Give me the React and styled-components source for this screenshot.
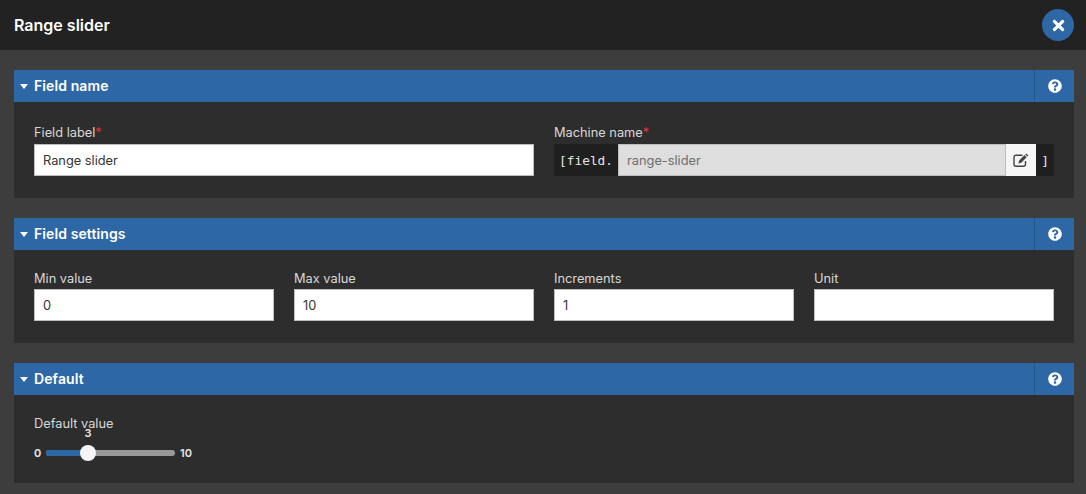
import React from 'react';
import styled, { createGlobalStyle } from 'styled-components';
import { FaQuestionCircle, FaTimes } from 'react-icons/fa';

const GlobalStyle = createGlobalStyle`
  html, body {
    margin: 0;
    padding: 0;
    background: #3d3d3d;
    font-family: Inter, "Liberation Sans", sans-serif;
  }
  * { box-sizing: border-box; }
`;

const Page = styled.div`
  width: 1086px;
  height: 494px;
  overflow: hidden;
  background: #3d3d3d;
`;

const TopBar = styled.header`
  height: 50px;
  background: #222222;
  display: flex;
  align-items: center;
  justify-content: space-between;
  padding: 0 12px 0 14px;
`;

const Title = styled.h1`
  margin: 0;
  color: #fff;
  font-size: 16px;
  font-weight: 600;
`;

const CloseButton = styled.button`
  width: 32px;
  height: 32px;
  border: 0;
  border-radius: 50%;
  padding: 0;
  background: #2d67a5;
  color: #fff;
  display: flex;
  align-items: center;
  justify-content: center;
  font-size: 17px;
`;

const Content = styled.main`
  padding: 20px 12px 0 14px;
  display: flex;
  flex-direction: column;
  gap: 20px;
`;

const Section = styled.section`
  background: #2d2d2d;
`;

const SectionHead = styled.div`
  height: 32px;
  background: #2d67a5;
  display: flex;
  align-items: center;
  color: #fff;
`;

const Caret = styled.span`
  width: 0;
  height: 0;
  margin: 0 6px;
  border-left: 4px solid transparent;
  border-right: 4px solid transparent;
  border-top: 5px solid #fff;
`;

const SectionTitle = styled.h2`
  margin: 0 0 1px;
  flex: 1;
  font-size: 14px;
  font-weight: 600;
  letter-spacing: 0.1px;
`;

const HelpCell = styled.div`
  width: 40px;
  height: 32px;
  border-left: 1px solid #255688;
  display: flex;
  align-items: center;
  justify-content: center;
  font-size: 14px;
`;

const Fields = styled.div`
  display: grid;
  grid-template-columns: repeat(${(p) => p.$cols}, 1fr);
  gap: 20px;
  padding: 20px 20px 22px;
`;

const Field = styled.div`
  min-width: 0;
`;

const Label = styled.label`
  display: block;
  height: ${(p) => (p.$tall ? 22 : 19)}px;
  color: #d8d8d8;
  font-size: 12.8px;
  line-height: ${(p) => (p.$tall ? 21 : 17)}px;
`;

const Required = styled.span`
  color: #d9393d;
`;

const Input = styled.input`
  display: block;
  width: 100%;
  height: 32px;
  padding: 0 8px;
  border: 1px solid #bdbdbd;
  border-radius: 0;
  background: #fff;
  color: #333;
  font: 12.8px Inter, "Liberation Sans", sans-serif;
  outline: none;
`;

const MachineRow = styled.div`
  display: flex;
  height: 32px;
  background: #1f1f1f;
  color: #e4e4e4;
`;

const Affix = styled.span`
  display: flex;
  align-items: center;
  justify-content: ${(p) => (p.$end ? 'center' : 'flex-end')};
  width: ${(p) => (p.$end ? 18 : 64)}px;
  padding-right: ${(p) => (p.$end ? 0 : 5)}px;
  font: 12.8px "DejaVu Sans Mono", monospace;
`;

const MachineInput = styled(Input)`
  flex: 1;
  width: auto;
  background: #dedede;
  color: #6d6d6d;
  min-width: 0;
`;

const EditButton = styled.button`
  width: 30px;
  height: 32px;
  padding: 0;
  border: 0;
  background: #f6f6f6;
  color: #444;
  display: flex;
  align-items: center;
  justify-content: center;
`;

const SliderField = styled.div`
  padding: 20px 20px 0;
  height: 88px;
`;

const SliderRow = styled.div`
  display: flex;
  align-items: center;
  gap: 5px;
  margin-top: 10px;
  height: 18px;
  color: #e8e8e8;
  font-size: 11px;
  font-weight: 600;
`;

const MinLabel = styled.span`
  width: 7px;
`;

const Track = styled.div`
  position: relative;
  width: 129px;
  height: 6px;
  border-radius: 3px;
  background: #999;
`;

const Fill = styled.div`
  height: 6px;
  border-radius: 3px;
  background: #2d67a5;
`;

const Thumb = styled.div`
  position: absolute;
  top: -5px;
  width: 16px;
  height: 16px;
  margin-left: -8px;
  border-radius: 50%;
  background: #f5f5f5;
`;

const Bubble = styled.span`
  position: absolute;
  top: -24px;
  width: 16px;
  margin-left: -8px;
  text-align: center;
`;

function EditIcon() {
  return (
    <svg width="16" height="14" viewBox="0 0 16 14" fill="none">
      <path
        d="M9.5 2.2H3a2 2 0 0 0-2 2v7a2 2 0 0 0 2 2h7.5a2 2 0 0 0 2-2V8"
        stroke="currentColor"
        strokeWidth="1.4"
      />
      <path
        d="M13.2 0.4l2.2 2.1-1 1-2.2-2.1zM11.5 2.1l2.2 2.1-5.4 5.5-2.9.7.7-2.9z"
        fill="currentColor"
      />
    </svg>
  );
}

function Panel({ title, children }) {
  return (
    <Section>
      <SectionHead>
        <Caret />
        <SectionTitle>{title}</SectionTitle>
        <HelpCell>
          <FaQuestionCircle />
        </HelpCell>
      </SectionHead>
      {children}
    </Section>
  );
}

export default function App() {
  const min = 0;
  const max = 10;
  const value = 3;
  const thumbLeft = 8 + ((value - min) / (max - min)) * (129 - 16) + 'px';

  return (
    <Page>
      <GlobalStyle />
      <TopBar>
        <Title>Range slider</Title>
        <CloseButton aria-label="Close">
          <FaTimes />
        </CloseButton>
      </TopBar>
      <Content>
        <Panel title="Field name">
          <Fields $cols={2}>
            <Field>
              <Label $tall>
                Field label<Required>*</Required>
              </Label>
              <Input defaultValue="Range slider" />
            </Field>
            <Field>
              <Label $tall>
                Machine name<Required>*</Required>
              </Label>
              <MachineRow>
                <Affix>[field.</Affix>
                <MachineInput defaultValue="range-slider" readOnly />
                <EditButton aria-label="Edit">
                  <EditIcon />
                </EditButton>
                <Affix $end>]</Affix>
              </MachineRow>
            </Field>
          </Fields>
        </Panel>
        <Panel title="Field settings">
          <Fields $cols={4}>
            <Field>
              <Label>Min value</Label>
              <Input defaultValue="0" />
            </Field>
            <Field>
              <Label>Max value</Label>
              <Input defaultValue="10" />
            </Field>
            <Field>
              <Label>Increments</Label>
              <Input defaultValue="1" />
            </Field>
            <Field>
              <Label>Unit</Label>
              <Input defaultValue="" />
            </Field>
          </Fields>
        </Panel>
        <Panel title="Default">
          <SliderField>
            <Label>Default value</Label>
            <SliderRow>
              <MinLabel>{min}</MinLabel>
              <Track>
                <Fill style={{ width: thumbLeft }} />
                <Bubble style={{ left: thumbLeft }}>{value}</Bubble>
                <Thumb style={{ left: thumbLeft }} />
              </Track>
              <span>{max}</span>
            </SliderRow>
          </SliderField>
        </Panel>
      </Content>
    </Page>
  );
}
